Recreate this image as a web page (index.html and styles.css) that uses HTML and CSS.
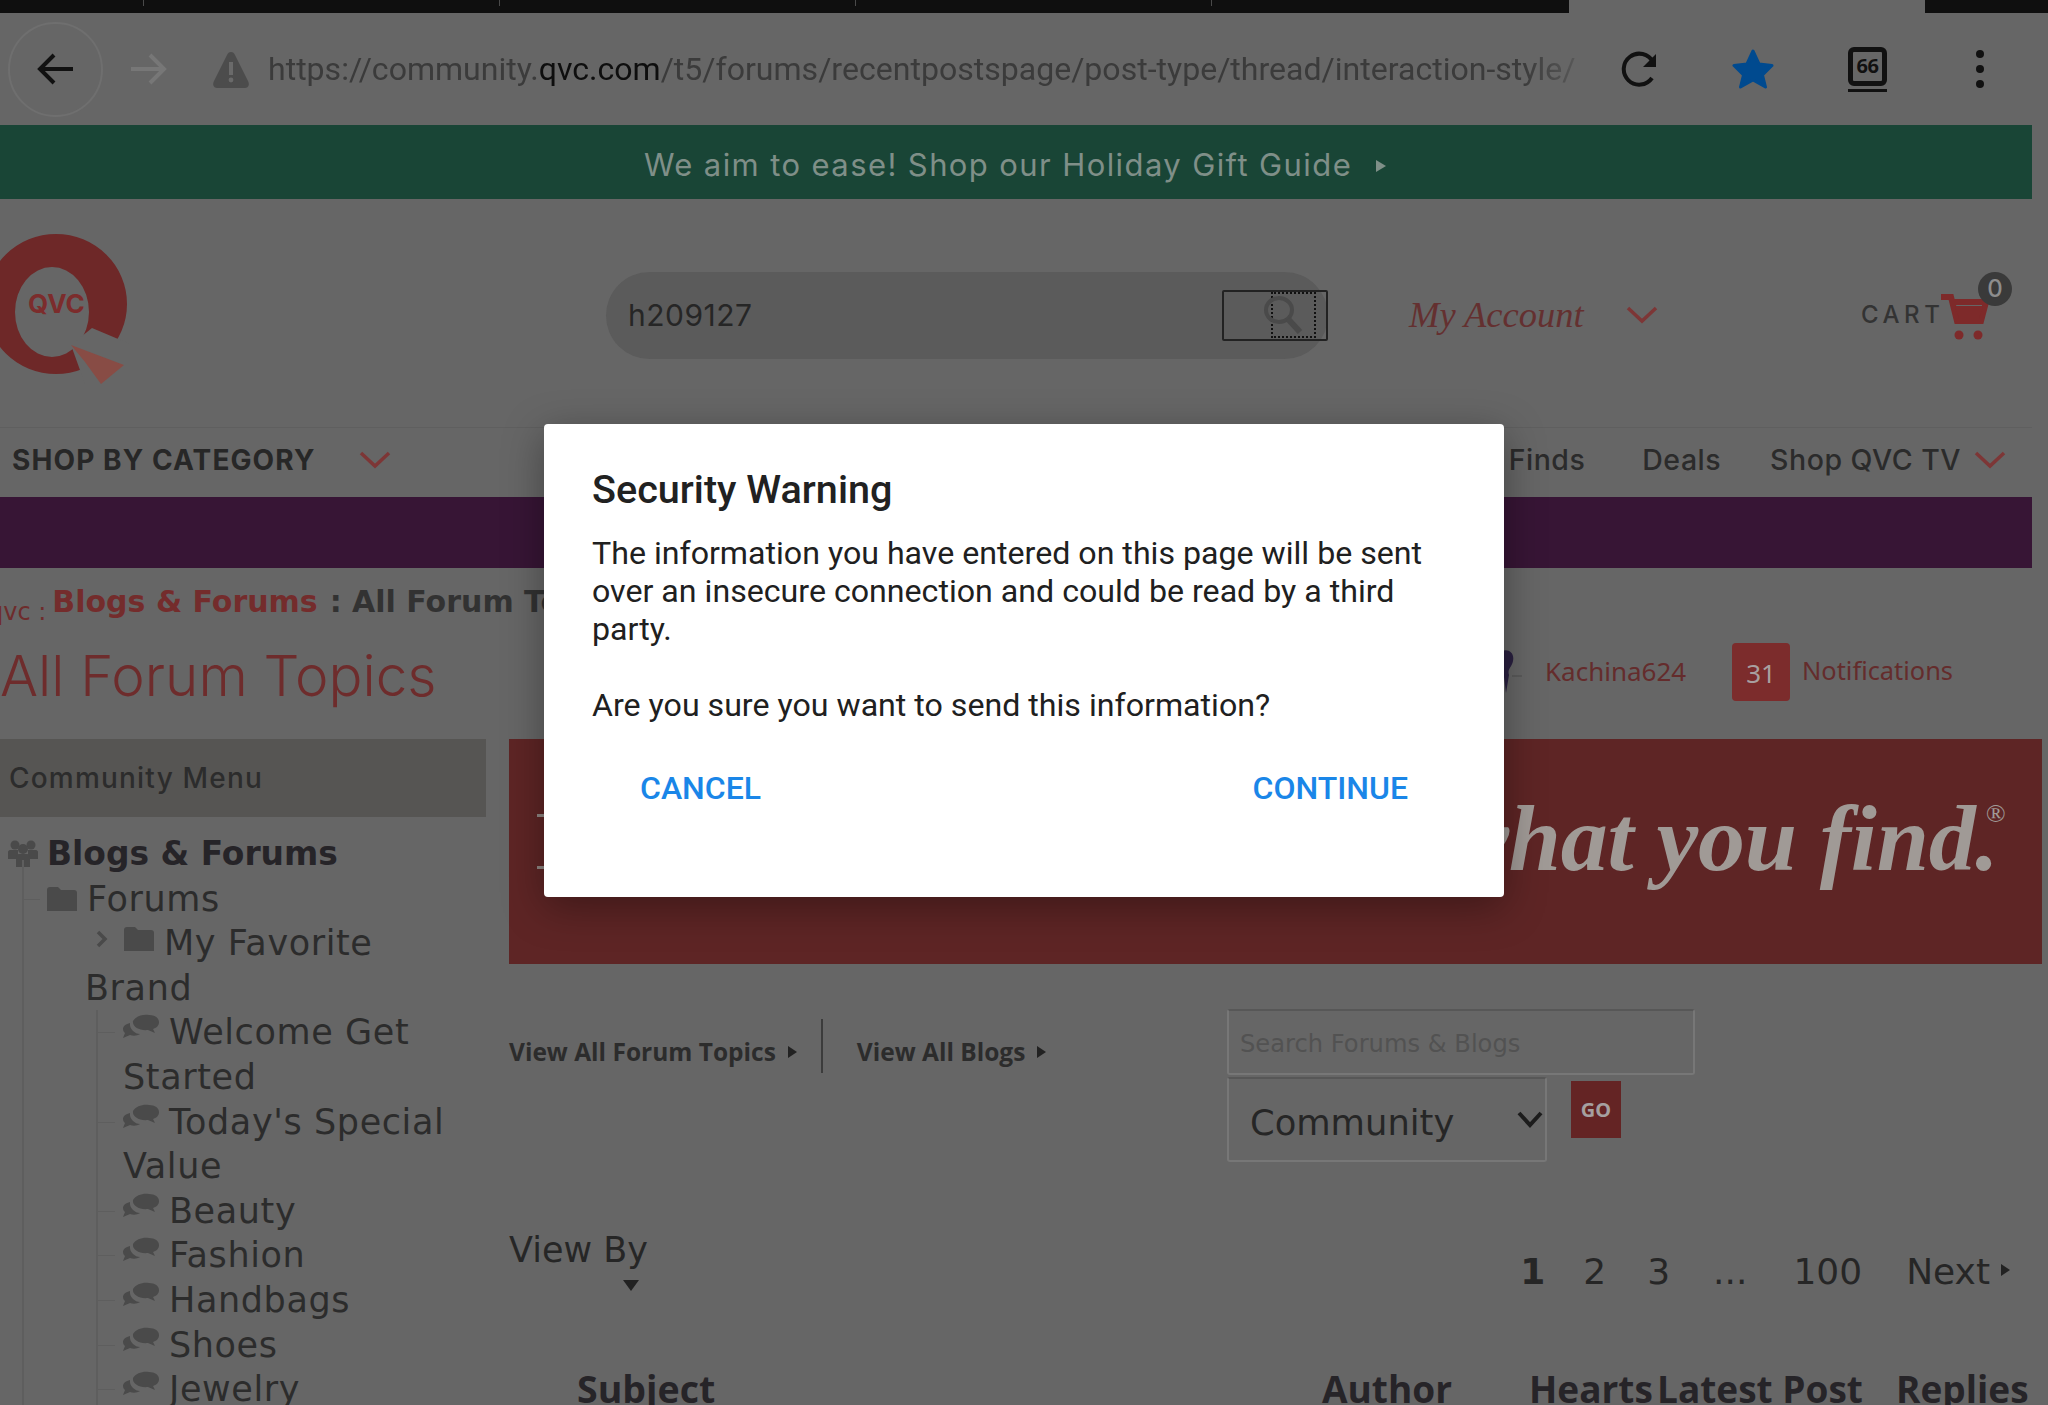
FILE: index.html
```html
<!DOCTYPE html>
<html lang="en">
<head>
<meta charset="utf-8">
<title>All Forum Topics</title>
<link rel="stylesheet" href="styles.css">
</head>
<body>
<div class="screen">
  <div class="tabstrip">
    <span class="tab t1"></span><span class="tab t2"></span><span class="tab t3"></span><span class="tab t4"></span>
    <span class="tab-active"></span>
  </div>
  <div class="toolbar">
    <div class="back-btn">
      <svg width="38" height="32" viewBox="0 0 38 32"><path d="M36 16H3M17 2 3 16l14 14" fill="none" stroke="#111" stroke-width="4"/></svg>
    </div>
    <svg class="fwd" width="38" height="32" viewBox="0 0 38 32"><path d="M2 16h33M21 2l14 14-14 14" fill="none" stroke="#777" stroke-width="4"/></svg>
    <svg class="warn" width="38" height="37" viewBox="0 0 38 37"><path d="M19 1c2 0 3 1 4 3l13 26c2 4 0 7-3 7H5c-3 0-5-3-3-7L15 4c1-2 2-3 4-3z" fill="#4c4c4c"/><rect x="17" y="11" width="4" height="13" fill="#6a6a6a"/><circle cx="19" cy="29" r="2.4" fill="#6a6a6a"/></svg>
    <div class="url"><span class="url-dim">https://community.</span><span class="url-host">qvc.com</span><span class="url-dim">/t5/forums/recentpostspage/post-type/thread/interaction-style/</span></div>
    <svg class="reload" width="38" height="36" viewBox="0 0 38 36"><path d="M31 27A15.500 15.500 0 1 1 32 11" fill="none" stroke="#111" stroke-width="4"/><path d="M35 3v13H22z" fill="#111"/></svg>
    <svg class="star" width="42" height="40" viewBox="0 0 42 40"><path d="M21 2l6 13 13 1.500-9.500 9.500 3 12-12.500-7-12.500 7 3-12L2 16.500 15 15z" fill="#004a8f" stroke="#004a8f" stroke-width="3" stroke-linejoin="round"/></svg>
    <div class="tabs-count"><span class="tabs-num">66</span></div>
    <svg class="menu-dots" width="10" height="40" viewBox="0 0 10 40"><circle cx="5" cy="5" r="4" fill="#111"/><circle cx="5" cy="20" r="4" fill="#111"/><circle cx="5" cy="35" r="4" fill="#111"/></svg>
  </div>
  <div class="promo"><span>We aim to ease! Shop our Holiday Gift Guide</span><i class="promo-arrow"></i></div>
  <header class="masthead">
    <svg class="logo" width="130" height="150" viewBox="0 0 130 150">
      <path fill-rule="evenodd" d="M-15 70a71 70 0 1 0 142 0a71 70 0 1 0-142 0zM15 78a37 45 0 1 0 74 0a37 45 0 1 0-74 0z" fill="#6e2828"/>
      <path d="M92 94l38 16v40H85l-14-39z" fill="#666"/>
      <path d="M71 111l53 20-23 19-16-22z" fill="#884c45"/>
      <text x="28" y="79" class="logo-text">QVC</text>
    </svg>
    <div class="search">
      <span class="search-value">h209127</span>
      <div class="search-btn">
        <div class="focus-box">
          <svg class="search-glass" width="42" height="38" viewBox="0 0 42 38"><ellipse cx="17" cy="14" rx="13" ry="12" fill="none" stroke="#4a4a4a" stroke-width="4"/><path d="M26 23l12 13" stroke="#4a4a4a" stroke-width="6"/></svg>
        </div>
      </div>
    </div>
    <div class="account">My Account</div>
    <svg class="chev-acct" width="32" height="18" viewBox="0 0 32 18"><path d="M2 2l14 13L30 2" fill="none" stroke="#7d3636" stroke-width="3.500"/></svg>
    <div class="cart-label">CART</div>
    <div class="cart-wrap">
      <svg width="50" height="46" viewBox="0 0 50 46"><path d="M0 3h10l6 24h24l5-19H12" fill="none" stroke="#7e2a2a" stroke-width="6"/><path d="M14 12h28l-4 13H18z" fill="#7e2a2a"/><circle cx="18" cy="41" r="4.500" fill="#7e2a2a"/><circle cx="37" cy="41" r="4.500" fill="#7e2a2a"/></svg>
      <span class="cart-badge">0</span>
    </div>
  </header>
  <nav class="navbar">
    <span class="shop-cat">SHOP BY CATEGORY</span>
    <svg class="chev-nav" width="32" height="18" viewBox="0 0 32 18"><path d="M2 2l14 13L30 2" fill="none" stroke="#7d3636" stroke-width="3.500"/></svg>
    <div class="nav-right">
      <span class="nav-link finds">Finds</span>
      <span class="nav-link deals">Deals</span>
      <span class="nav-link tv">Shop QVC TV</span>
      <svg width="32" height="18" viewBox="0 0 32 18"><path d="M2 2l14 13L30 2" fill="none" stroke="#7d3636" stroke-width="3.500"/></svg>
    </div>
  </nav>
  <div class="purple"></div>
  <div class="crumbs"><span class="crumb-qvc">QVC :</span><span class="crumb-link">Blogs &amp; Forums</span><span class="crumb-cur">: All Forum Topics</span></div>
  <div class="title-row">
    <h1 class="title">All Forum Topics</h1>
    <div class="userbar">
      <svg class="avatar" width="24" height="46" viewBox="0 0 24 46"><path d="M0 4c8-6 17-2 15 8-1 6-6 8-4 14l-3 18-2-16-6-4z" fill="#2a2040"/><path d="M14 27h10" stroke="#4f4f4f" stroke-width="1"/></svg>
      <span class="user-name">Kachina624</span>
      <span class="notif-badge">31</span>
      <span class="notif-label">Notifications</span>
    </div>
  </div>
  <div class="content">
    <aside class="side">
      <div class="side-head">Community Menu</div>
      <ul class="tree">
        <li class="tree-root"><svg class="ic-users" width="30" height="28" viewBox="0 0 30 28"><circle cx="7" cy="6" r="4.500" fill="#4a4a4a"/><circle cx="23" cy="6" r="4.500" fill="#4a4a4a"/><path d="M0 20v-7c0-1 1-2 2-2h8v9zM20 11h8c1 0 2 1 2 2v7H20z" fill="#4a4a4a"/><circle cx="15" cy="10" r="5" fill="#4a4a4a"/><path d="M8 28V18c0-2 1-3 3-3h8c2 0 3 1 3 3v10z" fill="#4a4a4a"/></svg>Blogs &amp; Forums</li>
        <li class="tree-l1"><svg class="ic-folder" width="30" height="24" viewBox="0 0 30 24"><path d="M0 24V3c0-2 1-3 3-3h8l3 3h13c2 0 3 1 3 3v18z" fill="#4a4a4a"/></svg>Forums</li>
        <li class="tree-l2"><svg class="ic-chev" width="12" height="18" viewBox="0 0 12 18"><path d="M2 2l7 7-7 7" fill="none" stroke="#4a4a4a" stroke-width="3.500"/></svg><svg class="ic-folder" width="30" height="24" viewBox="0 0 30 24"><path d="M0 24V3c0-2 1-3 3-3h8l3 3h13c2 0 3 1 3 3v18z" fill="#4a4a4a"/></svg>My Favorite Brand</li>
        <li class="tree-l3"><svg class="ic-chat" width="36" height="26" viewBox="0 0 36 26"><use href="#chat"/></svg>Welcome Get Started</li>
        <li class="tree-l3"><svg class="ic-chat" width="36" height="26" viewBox="0 0 36 26"><use href="#chat"/></svg>Today's Special Value</li>
        <li class="tree-l3"><svg class="ic-chat" width="36" height="26" viewBox="0 0 36 26"><use href="#chat"/></svg>Beauty</li>
        <li class="tree-l3"><svg class="ic-chat" width="36" height="26" viewBox="0 0 36 26"><use href="#chat"/></svg>Fashion</li>
        <li class="tree-l3"><svg class="ic-chat" width="36" height="26" viewBox="0 0 36 26"><use href="#chat"/></svg>Handbags</li>
        <li class="tree-l3"><svg class="ic-chat" width="36" height="26" viewBox="0 0 36 26"><use href="#chat"/></svg>Shoes</li>
        <li class="tree-l3"><svg class="ic-chat" width="36" height="26" viewBox="0 0 36 26"><use href="#chat"/></svg>Jewelry</li>
      </ul>
    </aside>
    <main class="main">
      <div class="banner"><span class="banner-text">Love what you find.<sup class="reg">®</sup></span></div>
      <div class="tools">
        <div class="view-links">
          <span class="view-link">View All Forum Topics</span><i class="tri-r"></i>
          <span class="view-sep"></span>
          <span class="view-link">View All Blogs</span><i class="tri-r"></i>
        </div>
        <div class="search-forms">
          <div class="field-text">Search Forums &amp; Blogs</div>
          <div class="select-row">
            <div class="field-select"><span class="select-value">Community</span><svg width="26" height="18" viewBox="0 0 26 18"><path d="M2 2l11 12L24 2" fill="none" stroke="#1c1c1c" stroke-width="4"/></svg></div>
            <span class="go-btn">GO</span>
          </div>
        </div>
      </div>
      <div class="pager-row">
        <div class="view-by"><span>View By</span><i class="tri-d"></i></div>
        <div class="pager"><b class="pg-1">1</b><span class="pg-2">2</span><span class="pg-3">3</span><span class="pg-4">...</span><span class="pg-5">100</span><span class="pg-6">Next</span><i class="tri-r"></i></div>
      </div>
      <div class="thead"><span class="th-subject">Subject</span><span class="th-author">Author</span><span class="th-hearts">Hearts</span><span class="th-latest">Latest Post</span><span class="th-replies">Replies</span></div>
    </main>
  </div>
  <svg class="defs" width="0" height="0"><defs><symbol id="chat" viewBox="0 0 36 26"><path d="M10 7C13 2 20 0 26 1c6 0 10 3 10 7s-3 6-6 7l2 4-7-3c-8 1-16-3-15-9z" fill="#4a4a4a"/><path d="M7 9c-4 1-7 3-7 6 0 2 1 3 2 4l-2 5 7-3c3 1 7 1 10-1-5 0-11-5-10-11z" fill="#4a4a4a"/></symbol></defs></svg>
  <div class="dialog" role="dialog">
    <h2 class="dlg-title">Security Warning</h2>
    <p class="dlg-body">The information you have entered on this page will be sent over an insecure connection and could be read by a third party.</p>
    <p class="dlg-q">Are you sure you want to send this information?</p>
    <div class="dlg-actions"><span class="dlg-btn">CANCEL</span><span class="dlg-btn">CONTINUE</span></div>
  </div>
</div>
</body>
</html>
```
FILE: styles.css
```css
* { box-sizing: border-box; }
html, body { margin: 0; padding: 0; background: #666; }
body { font-family: "Liberation Sans", sans-serif; }
.screen { position: relative; width: 2048px; height: 1405px; overflow: hidden; background: #666; }

/* browser chrome */
.tabstrip { display: flex; height: 13px; background: #0f0f0f; position: relative; }
.tab { display: block; width: 1px; height: 6px; background: #4a4a4a; margin-left: 355px; }
.t1 { margin-left: 143px; }
.tab-active { display: block; width: 356px; height: 13px; background: #666; margin-left: 357px; }
.t2 { margin-left: 355px; }
.toolbar { display: flex; align-items: center; height: 112px; padding-left: 8px; padding-bottom: 0; }
.back-btn { width: 95px; height: 95px; border: 2px solid #6f6f6f; border-radius: 50%; display: flex; align-items: center; justify-content: center; flex: none; }
.fwd { margin-left: 26px; flex: none; }
.warn { margin-left: 45px; flex: none; }
.url { width: 1310px; margin-left: 18px; font: 32.060px/40px Roboto, sans-serif; white-space: nowrap; overflow: hidden; color: #3b3b3b; flex: none; -webkit-mask-image: linear-gradient(90deg, #000 calc(100% - 55px), rgba(0,0,0,.3)); mask-image: linear-gradient(90deg, #000 calc(100% - 55px), rgba(0,0,0,.3)); }
.url-host { color: #0e0e0e; }
.reload { margin-left: 43px; flex: none; }
.star { margin-left: 73px; flex: none; }
.tabs-count { margin-left: 74px; width: 39px; height: 39px; border: 5px solid #111; border-radius: 6px; display: flex; align-items: center; justify-content: center; position: relative; flex: none; margin-top: -6px; }
.tabs-count::after { content: ""; position: absolute; left: -5px; right: -5px; bottom: -11px; height: 3px; background: #111; }
.tabs-num { font: 700 20px/1 "Noto Sans", sans-serif; color: #111; letter-spacing: -.5px; }
.menu-dots { margin-left: 88px; flex: none; }

.promo { height: 74px; width: 2032px; background: #194536; color: #7f8f88; display: flex; align-items: center; justify-content: center; padding: 4px 2px 0 0; font: 400 31px/1 "Inter", sans-serif; letter-spacing: 1.400px; }
.promo-arrow { margin-left: 24px; border-left: 10px solid #7f8f88; border-top: 6.500px solid transparent; border-bottom: 6.500px solid transparent; margin-top: 4px; }

/* masthead */
.masthead { height: 228px; display: flex; align-items: center; padding-top: 4px; }
.logo { flex: none; align-self: flex-start; margin-top: 31px; display: block; overflow: visible; }
.logo-text { font: 700 26px "Inter", sans-serif; fill: #7c2c2c; }
.search { margin-left: 476px; width: 722px; height: 87px; border-radius: 44px; background: #5b5b5b; display: flex; align-items: center; justify-content: space-between; padding-left: 22px; flex: none; }
.search-value { font: 400 30px/1 "Inter", sans-serif; color: #262626; letter-spacing: .5px; }
.search-btn { width: 106px; height: 51px; border: 2px solid #222; border-radius: 2px; padding-left: 47px; }
.focus-box { width: 45px; height: 46px; border: 2px dotted #111; display: flex; align-items: center; }
.search-glass { margin-left: -11px; flex: none; }
.account { margin-left: 81px; font: italic 400 36.500px/1 "Liberation Serif", serif; color: #643030; flex: none; width: 176px; white-space: nowrap; }
.chev-acct { margin-left: 41px; flex: none; }
.cart-label { margin-left: 203px; font: 500 24px/1 "Inter", sans-serif; letter-spacing: 4.500px; color: #333; flex: none; width: 80px; }
.cart-wrap { position: relative; width: 50px; height: 46px; flex: none; margin-top: 4px; }
.cart-badge { position: absolute; left: 37px; top: -22px; width: 34px; height: 34px; border-radius: 50%; background: #3a3a3a; color: #8d8d8d; font: 500 24px/34px "Inter", sans-serif; text-align: center; }

/* nav */
.navbar { height: 70px; width: 2032px; display: flex; align-items: center; padding-left: 12px; padding-bottom: 5px; border-top: 1px solid #5f5f5f; }
.shop-cat { font: 700 28px/1 "Inter", sans-serif; letter-spacing: 1.100px; color: #272727; width: 300px; white-space: nowrap; }
.chev-nav { margin-left: 47px; }
.nav-right { margin-left: auto; display: flex; align-items: center; padding-right: 26px; }
.nav-link { font: 500 28.500px/1 "Inter", sans-serif; letter-spacing: .5px; color: #2b2b2b; white-space: nowrap; }
.deals { margin-left: 57px; }
.tv { margin-left: 49px; margin-right: 13px; }
.purple { height: 71px; width: 2032px; background: #371535; }

/* breadcrumb + title */
.crumbs { height: 66px; display: flex; align-items: center; margin-left: -12px; padding-top: 2px; font: 700 30px/1 "DejaVu Sans", sans-serif; white-space: nowrap; }
.crumb-qvc { font: 400 24px/1 "DejaVu Sans", sans-serif; color: #6e2c2c; margin-top: 20px; margin-right: 6px; text-transform: lowercase; }
.crumb-link { color: #742c2c; }
.crumb-cur { color: #323232; margin-left: 12px; }
.title-row { height: 105px; display: flex; align-items: flex-start; }
.title { margin: 13px 0 0; font: 300 56.500px/58px "Inter", sans-serif; color: #6e2c2c; white-space: nowrap; width: 1498px; flex: none; }
.userbar { display: flex; align-items: center; flex: none; margin-top: 9px; }
.avatar { flex: none; margin-right: 23px; }
.user-name { font: 400 26px/1 "Noto Sans", sans-serif; color: #642c2c; width: 187px; margin-top: -3px; }
.notif-badge { width: 58px; height: 58px; background: #7c2c2c; border-radius: 4px; color: #a8a0a0; font: 400 26px/60px "Noto Sans", sans-serif; text-align: center; flex: none; }
.notif-label { font: 400 25.400px/1 "Noto Sans", sans-serif; color: #642c2c; margin-left: 12px; margin-top: -3px; }

/* content */
.content { display: flex; gap: 23px; }
.side { width: 486px; flex: none; }
.side-head { height: 78px; background: #565553; color: #2c2c2c; font: 500 28px/78px "Inter", sans-serif; letter-spacing: 1.200px; padding-left: 9px; }
.tree { list-style: none; margin: 15px 0 0; padding: 0; font: 400 35px/44.600px "DejaVu Sans", sans-serif; letter-spacing: .6px; color: #2c2c2c; position: relative; }
.tree svg { vertical-align: baseline; }
.tree-root { font-weight: 700; font-size: 32.900px; letter-spacing: 0; padding-left: 47px; text-indent: -39px; color: #262428; }
.ic-users { margin-right: 9px; vertical-align: -2px !important; }
.tree-l1 { padding-left: 47px; position: relative; }
.tree-l1 .ic-folder { margin-right: 10px; }
.tree-l1::before { content: ""; position: absolute; left: 22px; top: 22px; width: 18px; height: 1px; background: #5e5e5e; }
.tree::before { content: ""; position: absolute; left: 22px; top: 28px; bottom: -100px; width: 2px; background: #5e5e5e; }
.tree-l2 { padding-left: 85px; position: relative; }
.tree-l2 .ic-chev { margin: 0 16px 0 11px; vertical-align: 7px; }
.tree-l2 .ic-folder { margin-right: 10px; vertical-align: 4px; }
.tree-l3 { padding-left: 123px; position: relative; }
.tree-l3 .ic-chat { margin-right: 10px; vertical-align: 4px; }
.tree-l3::before { content: ""; position: absolute; left: 96px; top: 22px; width: 19px; height: 1px; background: #5e5e5e; }
.tree-l3::after { content: ""; position: absolute; left: 96px; top: 0; bottom: 0; width: 2px; background: #5e5e5e; }

/* main */
.main { flex: 1; min-width: 0; }
.banner { position: relative; height: 225px; width: 1533px; background: #5e2525; display: flex; justify-content: flex-end; align-items: center; padding-right: 37px; padding-bottom: 28px; overflow: hidden; }
.banner::before { content: ""; position: absolute; left: 28px; top: 75px; width: 8px; height: 3px; background: #8f8682; box-shadow: 0 52px 0 #8f8682; }
.banner-text { font: italic 700 94px/1 "Liberation Serif", serif; color: #a09a96; white-space: nowrap; letter-spacing: -.3px; flex: none; }
.reg { font-size: 26px; vertical-align: 48px; line-height: 0; font-weight: 400; margin-left: -13px; }
.tools { display: flex; margin-top: 45px; }
.view-links { display: flex; align-items: center; height: 54px; width: 718px; margin-top: 16px; }
.view-link { font: 700 24.500px/1 "Open Sans", sans-serif; color: #2c2c2c; white-space: nowrap; }
.tri-r { border-left: 9px solid #222; border-top: 6px solid transparent; border-bottom: 6px solid transparent; margin-left: 12px; display: block; }
.view-sep { width: 2px; height: 54px; background: #3c3c3c; margin: -13px 34px 0 24px; }
.search-forms { flex: none; }
.field-text { width: 468px; height: 66px; border: 2px solid #777; border-top-color: #575757; border-radius: 3px; font: 400 24.200px/66px "DejaVu Sans", sans-serif; color: #525252; padding-left: 11px; white-space: nowrap; }
.select-row { display: flex; margin-top: 2px; }
.field-select { width: 320px; height: 85px; border: 2px solid #777; border-top-color: #575757; border-radius: 3px; display: flex; align-items: center; justify-content: space-between; padding: 0 2px 0 21px; font: 400 35.300px/1 "DejaVu Sans", sans-serif; color: #262626; }
.select-value { margin-top: 6px; }
.go-btn { margin: 4px 0 0 24px; width: 50px; height: 57px; background: #642424; color: #a5a0a0; font: 700 20px/57px "Noto Sans", sans-serif; text-align: center; }
.pager-row { display: flex; align-items: flex-start; justify-content: space-between; margin-top: 66px; padding-right: 38px; }
.view-by { font: 400 35px/1 "DejaVu Sans", sans-serif; color: #262626; position: relative; width: 141px; height: 60px; padding-top: 5px; white-space: nowrap; }
.tri-d { display: block; position: absolute; left: 114px; top: 52px; border-top: 11px solid #222; border-left: 8px solid transparent; border-right: 8px solid transparent; }
.pager { display: flex; align-items: center; font: 400 36px/1 "DejaVu Sans", sans-serif; color: #262626; margin-top: 26px; }
.pg-2 { margin-left: 38px; }
.pg-3 { margin-left: 41px; }
.pg-4 { margin-left: 43px; }
.pg-5 { margin-left: 46px; }
.pg-6 { margin-left: 44px; }
.pager .tri-r { margin-top: -4px; margin-left: 11px; }
.thead { display: flex; margin-top: 75px; font: 700 37px/48.750px "Open Sans", sans-serif; color: #262428; white-space: nowrap; }
.th-subject { margin-left: 68px; width: 745px; font-size: 37.500px; }
.th-author { width: 207px; }
.th-hearts { width: 128px; }
.th-latest { width: 239px; }

.defs { position: absolute; }

/* dialog */
.dialog { position: absolute; left: 544px; top: 424px; width: 960px; height: 473px; background: #fff; border-radius: 4px; padding: 0 48px; box-shadow: 0 10px 40px rgba(0,0,0,.35); font-family: Roboto, sans-serif; color: #202020; }
.dlg-title { margin: 40px 0 0; font: 500 39.600px/52px Roboto, sans-serif; color: #212121; }
.dlg-body { margin: 18px 0 0; font: 400 32.150px/38px Roboto, sans-serif; }
.dlg-q { margin: 38px 0 0; font: 400 32.150px/38px Roboto, sans-serif; }
.dlg-actions { display: flex; justify-content: space-between; padding: 0 48px; margin-top: 44px; }
.dlg-btn { font: 500 32px/40px Roboto, sans-serif; color: #1a86e8; }
```
